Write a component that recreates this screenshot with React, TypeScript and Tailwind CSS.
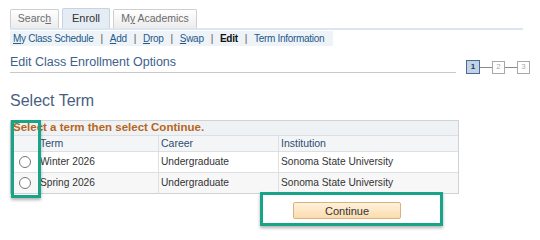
import React from 'react';

const font = { fontFamily: '"Liberation Sans", Arial, sans-serif' };

function Sep() {
  return <span className="px-[7px] text-[#555]">|</span>;
}

function Radio() {
  return (
    <span className="inline-block h-[12px] w-[12px] rounded-full border border-[#777] bg-white" />
  );
}

const rows = [
  { term: 'Winter 2026', career: 'Undergraduate', inst: 'Sonoma State University' },
  { term: 'Spring 2026', career: 'Undergraduate', inst: 'Sonoma State University' },
];

export default function App() {
  return (
    <div className="relative h-[240px] w-[540px] overflow-hidden whitespace-nowrap bg-white" style={font}>
      <div className="px-[10px] pt-[8px]">
        {/* Tabs */}
        <div className="flex items-end gap-[3px]">
          <div className="flex h-[19px] w-[49px] items-center justify-center rounded-t-[2px] border border-b-0 border-[#cfcfcf] bg-gradient-to-b from-white to-[#ececec] text-[10.5px] text-[#6b6b6b]">
            <span>
              Searc<span className="underline">h</span>
            </span>
          </div>
          <div className="flex h-[20px] w-[48px] items-center justify-center rounded-t-[2px] border border-b-0 border-[#c5d3e2] bg-[#e4ecf4] text-[11px] text-[#333]">
            Enroll
          </div>
          <div className="flex h-[19px] w-[84px] items-center justify-center rounded-t-[2px] border border-b-0 border-[#cfcfcf] bg-gradient-to-b from-white to-[#ececec] text-[10.5px] text-[#6b6b6b]">
            <span>
              M<span className="underline">y</span> Academics
            </span>
          </div>
        </div>
        <div className="h-[2px] w-[513px] bg-[#dbe6f2]" />

        {/* Sub nav */}
        <div className="mt-[1px] flex h-[15px] w-[323px] items-center bg-[#eef3f7] pl-[3px] text-[10px] tracking-[-0.3px] text-[#24588a]">
          <span>
            <span className="underline">M</span>y Class Schedule
          </span>
          <Sep />
          <span>
            <span className="underline">A</span>dd
          </span>
          <Sep />
          <span>
            <span className="underline">D</span>rop
          </span>
          <Sep />
          <span>
            <span className="underline">S</span>wap
          </span>
          <Sep />
          <span className="font-bold text-[#111]">Edit</span>
          <Sep />
          <span>Term Information</span>
        </div>

        {/* Page title + steps */}
        <div className="mt-[8px] flex items-end">
          <div className="w-[446px] border-b border-[#c8c8c8] pb-[2px] text-[12.5px] leading-[16px] text-[#3e6189]">
            Edit Class Enrollment Options
          </div>
          <div className="ml-[10px] flex translate-y-[1px] items-center">
            <div className="flex h-[14px] w-[14px] items-center justify-center border border-[#4a6a95] bg-[#c3d3e6] text-[8px] font-bold text-[#1e3c66]">
              1
            </div>
            <div className="h-px w-[12px] bg-[#8a8a8a]" />
            <div className="flex h-[13px] w-[13px] items-center justify-center border border-[#a8a8a8] bg-white text-[8px] text-[#aaa]">
              2
            </div>
            <div className="h-px w-[12px] bg-[#8a8a8a]" />
            <div className="flex h-[13px] w-[13px] items-center justify-center border border-[#a8a8a8] bg-white text-[8px] text-[#aaa]">
              3
            </div>
          </div>
        </div>

        {/* Section title */}
        <div className="mt-[18px] text-[16px] leading-[20px] text-[#4a5f80]">Select Term</div>

        {/* Table */}
        <div className="mt-[9px] w-[449px] border border-[#cfd3d8] text-[#333]">
          <div className="flex h-[14px] items-center bg-[#eef2f4] pl-[2px] text-[11.5px] font-bold text-[#b8651c]">
            Select a term then select Continue.
          </div>
          <div className="flex h-[16px] items-center border-t border-[#dde0e3] bg-[#f4f5f6] text-[10.5px] text-[#2c4d73]">
            <div className="h-full w-[28px] border-r border-[#dde0e3]" />
            <div className="flex h-full w-[120px] items-center border-r border-[#dde0e3] pl-[1px]">Term</div>
            <div className="flex h-full w-[120px] items-center border-r border-[#dde0e3] pl-[2px]">Career</div>
            <div className="flex h-full flex-1 items-center pl-[2px]">Institution</div>
          </div>
          {rows.map((r, i) => (
            <div
              key={r.term}
              className={`flex h-[21px] items-center border-t border-[#dde0e3] text-[10.2px] ${
                i === 0 ? 'bg-white' : 'bg-[#f7f7f7]'
              }`}
            >
              <div className="flex h-full w-[28px] items-center justify-center border-r border-[#dde0e3]">
                <Radio />
              </div>
              <div className="flex h-full w-[120px] items-center border-r border-[#dde0e3] pl-[1px]">{r.term}</div>
              <div className="flex h-full w-[120px] items-center border-r border-[#dde0e3] pl-[2px]">{r.career}</div>
              <div className="flex h-full flex-1 items-center pl-[2px]">{r.inst}</div>
            </div>
          ))}
        </div>

        {/* Continue */}
        <div className="mt-[8px] flex pl-[283px]">
          <button className="h-[17px] w-[108px] rounded-[2px] border border-[#dcb27c] bg-gradient-to-b from-[#fff1dc] to-[#fbdcae] text-[11px] text-[#333]">
            Continue
          </button>
        </div>
      </div>

      {/* Highlight boxes */}
      <div className="absolute left-[11px] top-[120px] h-[78px] w-[30px] border-[3px] border-[#17a487] shadow-[0_2px_3px_rgba(0,0,0,0.3)]" />
      <div className="absolute left-[260px] top-[192px] h-[34px] w-[183px] border-[3px] border-[#17a487] shadow-[0_2px_3px_rgba(0,0,0,0.3)]" />
    </div>
  );
}
